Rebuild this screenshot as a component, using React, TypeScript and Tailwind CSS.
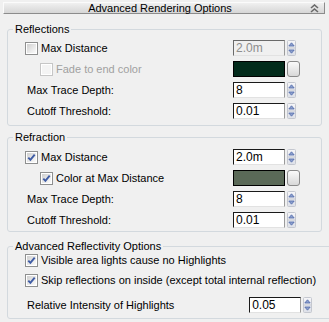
import React from 'react';

// Win7-style rollout: "Advanced Rendering Options"

const CheckBox: React.FC<{ checked?: boolean; disabled?: boolean }> = ({ checked, disabled }) => (
  <div
    className={`w-[13px] h-[13px] shrink-0 border ${
      disabled ? 'border-[#c6c6c6]' : 'border-[#8e8f8f]'
    } bg-white p-[1px]`}
  >
    <div
      className={`w-full h-full relative ${
        disabled
          ? 'bg-[#f4f4f4]'
          : 'bg-gradient-to-br from-[#cfcfcf] via-[#e6e6e6] to-[#fbfbfb]'
      }`}
    >
      {checked && (
        <svg width="11" height="11" viewBox="0 0 11 11" className="absolute -left-[1px] -top-[1px]">
          <path d="M2.3 5.6 L4.4 7.9 L8.7 2.6" fill="none" stroke="#3f5ca5" strokeWidth="1.9" />
        </svg>
      )}
    </div>
  </div>
);

const Spinner: React.FC = () => (
  <svg width="9" height="16" viewBox="0 0 9 16" className="shrink-0">
    <defs>
      <linearGradient id="spn" x1="0" y1="0" x2="0" y2="1">
        <stop offset="0" stopColor="#f6f6f8" />
        <stop offset="1" stopColor="#dde0e8" />
      </linearGradient>
    </defs>
    <rect x="0.5" y="0.5" width="8" height="15" rx="1" fill="url(#spn)" stroke="#c4c7cf" />
    <line x1="1" y1="8" x2="8" y2="8" stroke="#c4c7cf" />
    <path d="M1.8 6 L4.5 2.8 L7.2 6 Z" fill="#8fa2cf" stroke="#4e67a8" strokeWidth="0.8" />
    <path d="M1.8 10 L4.5 13.2 L7.2 10 Z" fill="#8fa2cf" stroke="#4e67a8" strokeWidth="0.8" />
  </svg>
);

const NumberField: React.FC<{ value: string; disabled?: boolean }> = ({ value, disabled }) => (
  <div className="flex items-center gap-[2px]">
    <div
      className={`w-[52px] h-[16px] border border-t-[#1a1a1a] border-l-[#1a1a1a] border-r-[#9a9a9a] border-b-[#e2e2e2] pl-[2px] text-[12px] leading-[14px] ${
        disabled ? 'bg-[#f0f0f0] text-[#8d8d8d] border-t-[#6a6a6a] border-l-[#6a6a6a]' : 'bg-white text-black'
      }`}
    >
      {value}
    </div>
    <Spinner />
  </div>
);

const Swatch: React.FC<{ color: string }> = ({ color }) => (
  <div className="flex items-center gap-[2px]">
    <div className="w-[52px] h-[16px] border border-black" style={{ backgroundColor: color }} />
    <div className="w-[13px] h-[16px] rounded-[3px] border border-[#8a8a8a] bg-gradient-to-b from-[#fafafa] to-[#d8d8d8]" />
  </div>
);

const Row: React.FC<{ children: React.ReactNode; right?: React.ReactNode; className?: string }> = ({
  children,
  right,
  className = '',
}) => (
  <div className={`flex items-center h-[16px] pl-[12px] pr-[21px] ${className}`}>
    <div className="flex-1 flex items-center min-w-0">{children}</div>
    {right && <div className="w-[67px] shrink-0">{right}</div>}
  </div>
);

const Group: React.FC<{ title: string; className?: string; children: React.ReactNode }> = ({
  title,
  className = '',
  children,
}) => (
  <fieldset className={`border border-[#d3d9de] rounded-[3px] pl-[5px] ${className}`}>
    <legend className="px-[2px] leading-[12px] text-black">{title}</legend>
    {children}
  </fieldset>
);

const App: React.FC = () => {
  return (
    <div className="w-[329px] h-[322px] bg-[#f0f0f0] overflow-hidden font-['Liberation_Sans',Arial,sans-serif] text-[11px] text-black">
      {/* Rollout title bar */}
      <div className="mt-[2px] ml-[3px] w-[322px] h-[12px] flex items-center border border-t-[#fbfbfb] border-l-[#fbfbfb] border-r-[#8c8c8c] border-b-[#8c8c8c] bg-gradient-to-b from-[#f0f0f0] to-[#d6d6d6]">
        <div className="flex-1 text-center leading-[10px] pl-[6px]">Advanced Rendering Options</div>
        <svg width="9" height="9" viewBox="0 0 9 9" className="mr-[5px]">
          <path d="M1 4 L4.5 1 L8 4" fill="none" stroke="#6a6a6a" strokeWidth="1.6" />
          <path d="M1 8 L4.5 5 L8 8" fill="none" stroke="#6a6a6a" strokeWidth="1.6" />
        </svg>
      </div>

      <div className="pl-[7px] w-[322px]">
        {/* Reflections */}
        <Group title="Reflections" className="mt-[9px] pt-[5px] pb-[6px]">
          <div className="flex flex-col gap-[5px]">
            <Row right={<NumberField value="2.0m" disabled />}>
              <CheckBox />
              <span className="ml-[3px]">Max Distance</span>
            </Row>
            <Row right={<Swatch color="#022b1b" />}>
              <div className="pl-[15px] flex items-center">
                <CheckBox disabled />
                <span className="ml-[3px] text-[#a0a0a0]">Fade to end color</span>
              </div>
            </Row>
            <Row right={<NumberField value="8" />}>
              <span className="pl-[2px]">Max Trace Depth:</span>
            </Row>
            <Row right={<NumberField value="0.01" />}>
              <span className="pl-[2px]">Cutoff Threshold:</span>
            </Row>
          </div>
        </Group>

        {/* Refraction */}
        <Group title="Refraction" className="mt-[5px] pt-[6px] pb-[3px]">
          <div className="flex flex-col gap-[5px]">
            <Row right={<NumberField value="2.0m" />}>
              <CheckBox checked />
              <span className="ml-[3px]">Max Distance</span>
            </Row>
            <Row right={<Swatch color="#5a6957" />}>
              <div className="pl-[15px] flex items-center">
                <CheckBox checked />
                <span className="ml-[3px]">Color at Max Distance</span>
              </div>
            </Row>
            <Row right={<NumberField value="8" />}>
              <span className="pl-[2px]">Max Trace Depth:</span>
            </Row>
            <Row right={<NumberField value="0.01" />}>
              <span className="pl-[2px]">Cutoff Threshold:</span>
            </Row>
          </div>
        </Group>

        {/* Advanced Reflectivity Options */}
        <Group title="Advanced Reflectivity Options" className="mt-[8px] pt-0 pb-[5px]">
          <Row>
            <CheckBox checked />
            <span className="ml-[3px]">Visible area lights cause no Highlights</span>
          </Row>
          <Row className="mt-[4px]">
            <CheckBox checked />
            <span className="ml-[3px] whitespace-nowrap">Skip reflections on inside (except total internal reflection)</span>
          </Row>
          <Row className="mt-[9px]" right={<NumberField value="0.05" />}>
            <span className="pl-[2px]">Relative Intensity of Highlights</span>
          </Row>
        </Group>
      </div>
    </div>
  );
};

export default App;
